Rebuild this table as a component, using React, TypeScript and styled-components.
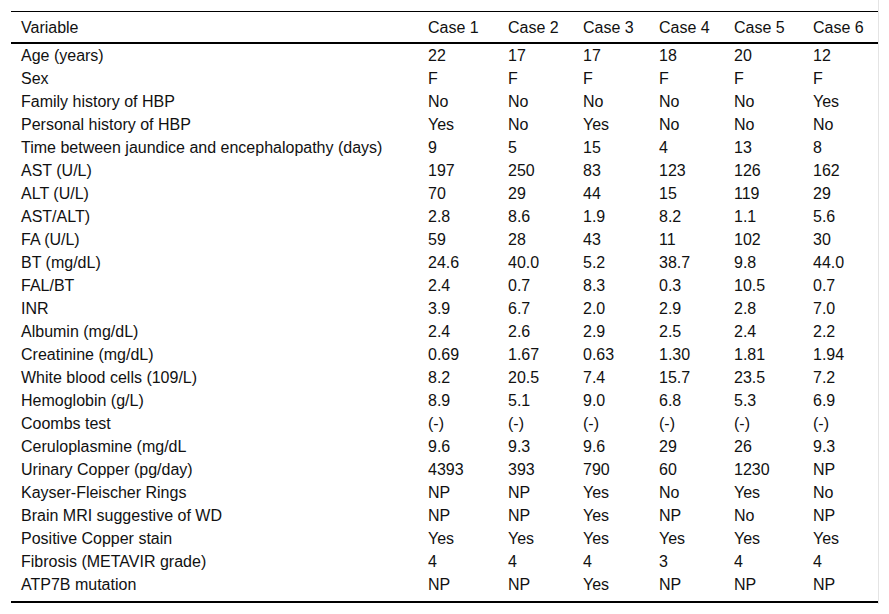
import React from "react";
import styled, { createGlobalStyle } from "styled-components";

const Global = createGlobalStyle`
  html, body { margin: 0; padding: 0; background: #fff; }
  body { font-family: "Liberation Sans", Arial, sans-serif; color: #111; }
`;

const Frame = styled.div`
  box-sizing: content-box;
  width: 867px;
  padding: 11px 0 0 11px;
  border-right: 1px solid #e4e4e4;
  height: 593px;
`;

const Table = styled.table`
  width: 867px;
  table-layout: fixed;
  border-collapse: collapse;
  font-size: 16px;
  border-top: 1px solid #000;
  border-bottom: 2px solid #000;
`;

const HeadCell = styled.th`
  text-align: left;
  font-weight: 400;
  padding: 1px 0 0 10px;
  height: 29px;
  line-height: 29px;
  border-bottom: 2px solid #000;
  white-space: nowrap;
`;

const Cell = styled.td<{ $last?: boolean }>`
  padding: 1px 0 ${(p) => (p.$last ? "5px" : "0")} 10px;
  line-height: 22px;
  height: 22px;
  white-space: nowrap;
  vertical-align: top;
`;

const widths = [407, 80, 75, 76, 75, 79, 75];
const headers = ["Variable", "Case 1", "Case 2", "Case 3", "Case 4", "Case 5", "Case 6"];

const rows: string[][] = [
  ["Age (years)", "22", "17", "17", "18", "20", "12"],
  ["Sex", "F", "F", "F", "F", "F", "F"],
  ["Family history of HBP", "No", "No", "No", "No", "No", "Yes"],
  ["Personal history of HBP", "Yes", "No", "Yes", "No", "No", "No"],
  ["Time between jaundice and encephalopathy (days)", "9", "5", "15", "4", "13", "8"],
  ["AST (U/L)", "197", "250", "83", "123", "126", "162"],
  ["ALT (U/L)", "70", "29", "44", "15", "119", "29"],
  ["AST/ALT)", "2.8", "8.6", "1.9", "8.2", "1.1", "5.6"],
  ["FA (U/L)", "59", "28", "43", "11", "102", "30"],
  ["BT (mg/dL)", "24.6", "40.0", "5.2", "38.7", "9.8", "44.0"],
  ["FAL/BT", "2.4", "0.7", "8.3", "0.3", "10.5", "0.7"],
  ["INR", "3.9", "6.7", "2.0", "2.9", "2.8", "7.0"],
  ["Albumin (mg/dL)", "2.4", "2.6", "2.9", "2.5", "2.4", "2.2"],
  ["Creatinine (mg/dL)", "0.69", "1.67", "0.63", "1.30", "1.81", "1.94"],
  ["White blood cells (109/L)", "8.2", "20.5", "7.4", "15.7", "23.5", "7.2"],
  ["Hemoglobin (g/L)", "8.9", "5.1", "9.0", "6.8", "5.3", "6.9"],
  ["Coombs test", "(-)", "(-)", "(-)", "(-)", "(-)", "(-)"],
  ["Ceruloplasmine (mg/dL", "9.6", "9.3", "9.6", "29", "26", "9.3"],
  ["Urinary Copper (pg/day)", "4393", "393", "790", "60", "1230", "NP"],
  ["Kayser-Fleischer Rings", "NP", "NP", "Yes", "No", "Yes", "No"],
  ["Brain MRI suggestive of WD", "NP", "NP", "Yes", "NP", "No", "NP"],
  ["Positive Copper stain", "Yes", "Yes", "Yes", "Yes", "Yes", "Yes"],
  ["Fibrosis (METAVIR grade)", "4", "4", "4", "3", "4", "4"],
  ["ATP7B mutation", "NP", "NP", "Yes", "NP", "NP", "NP"],
];

export default function App() {
  return (
    <>
      <Global />
      <Frame>
        <Table>
          <colgroup>
            {widths.map((w, i) => (
              <col key={i} style={{ width: w }} />
            ))}
          </colgroup>
          <thead>
            <tr>
              {headers.map((h) => (
                <HeadCell key={h}>{h}</HeadCell>
              ))}
            </tr>
          </thead>
          <tbody>
            {rows.map((r, ri) => (
              <tr key={ri}>
                {r.map((c, ci) => (
                  <Cell key={ci} $last={ri === rows.length - 1}>
                    {c}
                  </Cell>
                ))}
              </tr>
            ))}
          </tbody>
        </Table>
      </Frame>
    </>
  );
}
